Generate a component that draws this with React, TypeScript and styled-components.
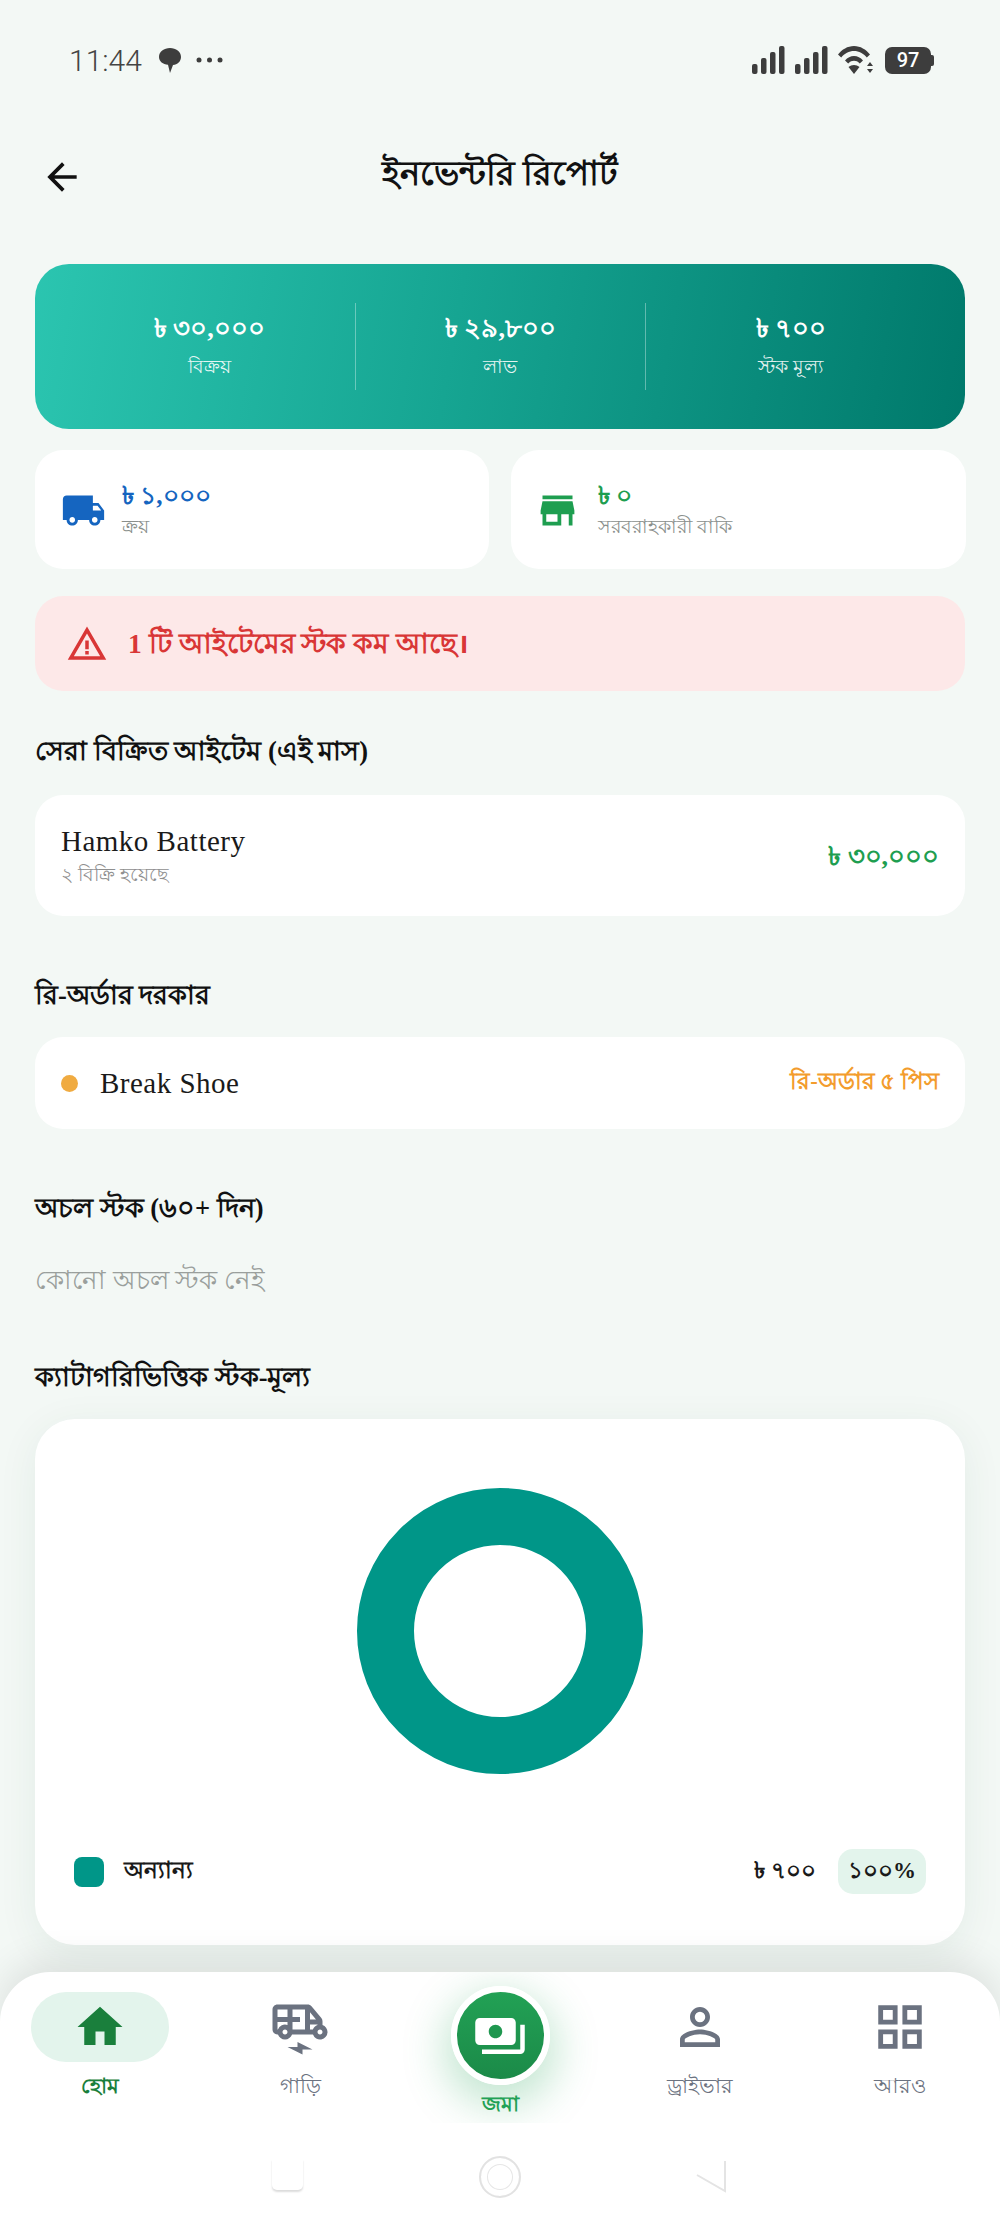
import React from "react";
import styled, { createGlobalStyle } from "styled-components";
import {
  MdArrowBack, MdLocalShipping, MdStore, MdWarningAmber, MdHome,
  MdOutlineElectricRickshaw, MdPersonOutline, MdOutlineGridView, MdPayments,
} from "react-icons/md";

const Global = createGlobalStyle`
  html, body { margin: 0; padding: 0; background: #f3f8f5; }
  * { box-sizing: border-box; }
`;

const Page = styled.div`
  width: 1000px; height: 2225px; overflow: hidden; display: flex; flex-direction: column;
  background: #f3f8f5; color: #111;
  font-family: "Liberation Serif", "Noto Sans", serif;
`;
const StatusBar = styled.div`
  height: 120px; flex: none; padding: 0 69px 0 69px; display: flex; align-items: center; justify-content: space-between; color: #3d3d3d;
`;
const StatusGroup = styled.div`display: flex; align-items: center; gap: ${p => p.$gap ?? 8}px;`;
const Time = styled.span`font: 300 30px Roboto, sans-serif; color: #444; margin-right: 8px;`;
const Battery = styled.span`
  width: 46px; height: 27px; border-radius: 7px; background: #3d3d3d; color: #fff; position: relative;
  font: 500 20px/27px Roboto, sans-serif; text-align: center; display: block; margin-left: 2px;
  &::after { content: ""; position: absolute; right: -3px; top: 8px; width: 3px; height: 11px; border-radius: 0 2px 2px 0; background: #3d3d3d; }
`;
const Header = styled.header`
  height: 112px; flex: none; display: flex; align-items: center; justify-content: center; position: relative;
`;
const Back = styled.span`position: absolute; left: 40px; top: 35px; display: flex; color: #111;`;
const Title = styled.h1`margin: 0 0 4px; font-size: 34px; font-weight: 700; line-height: 48px;`;
const Main = styled.main`flex: none; padding: 32px 35px 0; display: flex; flex-direction: column;`;
const Hero = styled.section`
  height: 165px; border-radius: 34px; padding: 39px 29px; flex: none; display: grid; grid-template-columns: repeat(3, 1fr);
  background: linear-gradient(100deg, #2bc5b0 0%, #16a592 45%, #00796b 100%); color: #fff;
`;
const HeroCol = styled.div`
  display: flex; flex-direction: column; align-items: center; padding-top: 9px; gap: 8px;
  border-left: ${p => (p.$first ? "0" : "1px solid rgba(255,255,255,.35)")};
`;
const HeroValue = styled.div`font-size: 26px; font-weight: 700; line-height: 34px;`;
const HeroLabel = styled.div`font-size: 19px; line-height: 26px; color: rgba(255,255,255,.9);`;
const TwoUp = styled.div`margin-top: 21px; display: grid; grid-template-columns: 454px 455px; gap: 22px;`;
const StatCard = styled.div`
  height: 119px; background: #fff; border-radius: 28px; display: flex; align-items: center; padding-left: ${p => p.$pad}px; gap: ${p => p.$gap}px;
`;
const StatIcon = styled.span`display: flex; color: ${p => p.$color}; margin-top: 2px;`;
const StatText = styled.div`display: flex; flex-direction: column; gap: 1px; padding-bottom: 1px;`;
const StatValue = styled.div`font-size: 25px; font-weight: 700; line-height: 34px; color: ${p => p.$color};`;
const StatLabel = styled.div`font-size: 18.500px; line-height: 26px; color: #8a8f8c;`;
const Alert = styled.div`
  margin-top: 27px; height: 95px; border-radius: 28px; background: #fde8e8; display: flex; align-items: center; gap: 20px; padding-left: 31px; color: #d93636;
`;
const AlertText = styled.span`font-size: 27.500px; font-weight: 700; line-height: 36px;`;
const SectionTitle = styled.h2`
  margin: ${p => p.$top}px 0 0; height: 40px; font-size: 26.500px; font-weight: 700; line-height: 40px; color: #111;
`;
const RowCard = styled.div`
  margin-top: ${p => p.$top}px; height: ${p => p.$h}px; background: #fff; border-radius: 28px; display: flex; align-items: center; justify-content: space-between; padding: 0 26px;
`;
const ItemName = styled.div`font-size: 29px; font-weight: 400; letter-spacing: .5px; line-height: 36px; color: #1a1a1a;`;
const ItemSub = styled.div`font-size: 19px; line-height: 28px; color: #8f8f8f; margin-top: 2px;`;
const Price = styled.div`font-size: 26px; font-weight: 700; color: #1e9e50; margin-top: 4px;`;
const Dot = styled.span`width: 17px; height: 17px; border-radius: 50%; background: #f0ab41; flex: none;`;
const RowLeft = styled.div`display: flex; align-items: center; gap: 22px;`;
const Reorder = styled.div`font-size: 22.500px; font-weight: 600; color: #f39c2d;`;
const Empty = styled.div`margin-top: 33px; height: 40px; line-height: 40px; font-size: 26px; color: #9a9f9c;`;
const ChartCard = styled.section`
  margin-top: 22px; height: 526px; background: #fff; border-radius: 40px; padding: 69px 39px 0 39px;
  box-shadow: 0 8px 40px rgba(30, 90, 60, .07); display: flex; flex-direction: column; align-items: stretch;
`;
const DonutWrap = styled.div`display: flex; justify-content: center;`;
const Legend = styled.div`margin-top: 75px; height: 45px; display: flex; align-items: center; gap: 22px;`;
const Swatch = styled.span`width: 30px; height: 30px; border-radius: 8px; background: #009688; flex: none;`;
const LegendLabel = styled.span`font-size: 23px; font-weight: 600; color: #1a1a1a; margin-right: auto; margin-left: -2px;`;
const LegendValue = styled.span`font-size: 23px; font-weight: 600; color: #1a1a1a;`;
const Percent = styled.span`
  width: 88px; height: 45px; border-radius: 15px; background: #e3f4ec; font-size: 23px; font-weight: 700; display: flex; align-items: center; justify-content: center; color: #1a1a1a;
`;
const Nav = styled.nav`
  margin-top: 27px; flex: 1; background: #fff; border-radius: 50px 50px 0 0; position: relative; z-index: 2; box-shadow: 0 -12px 36px rgba(0,0,0,.09);
  display: flex; flex-direction: column;
`;
const NavRow = styled.div`height: 151px; flex: none; overflow: hidden; display: grid; grid-template-columns: repeat(5, 1fr);`;
const NavItem = styled.div`display: flex; flex-direction: column; align-items: center;`;
const NavIcon = styled.span`
  margin-top: 20px; width: 138px; height: 70px; border-radius: 35px; display: flex; align-items: center; justify-content: center;
  background: ${p => (p.$active ? "#e3f4ec" : "transparent")}; color: ${p => (p.$active ? "#1a7f3c" : "#6b7280")};
`;
const NavLabel = styled.span`margin-top: 8px; font-size: 21px; line-height: 32px; font-weight: ${p => (p.$active ? 600 : 500)}; color: ${p => p.$color};`;
const CenterButton = styled.span`
  margin-top: 14px; width: 99px; height: 99px; border-radius: 50%; border: 6px solid #fff; color: #fff; display: flex; align-items: center; justify-content: center;
  box-shadow: 0 14px 40px 8px rgba(34, 161, 85, .26); background: linear-gradient(180deg, #22a155, #1b8a48);
`;
const CenterLabel = styled(NavLabel)`margin-top: 3px; font-weight: 600;`;
const SystemBar = styled.div`flex: 1; display: grid; grid-template-columns: repeat(3, 200px); justify-content: center; justify-items: center; padding-top: 36px; align-items: start;`;
const SysSquare = styled.span`width: 31px; height: 31px; margin-left: -26px; border-radius: 0 0 5px 5px; background: #fff; box-shadow: 0 2px 2px rgba(0,0,0,.14);`;
const SysCircle = styled.span`width: 42px; height: 42px; margin-top: -3px; border-radius: 50%; border: 2px solid #e2e2e2; box-shadow: inset 0 0 0 6px #fff, inset 0 0 0 7px #e6e6e6;`;
const SysBack = styled.svg`margin-left: 22px; display: block;`;

const Signal = () => (
  <svg width="34" height="28" viewBox="0 0 34 28" fill="#3d3d3d">
    <rect x="0" y="18" width="5.500" height="10" rx="2" /><rect x="9" y="12" width="5.500" height="16" rx="2" />
    <rect x="18" y="6" width="5.500" height="22" rx="2" /><rect x="27" y="0" width="5.500" height="28" rx="2" />
  </svg>
);

export default function App() {
  return (
    <Page>
      <Global />
      <StatusBar>
        <StatusGroup $gap={8}>
          <Time>11:44</Time>
          <svg width="24" height="30" viewBox="0 0 24 30" fill="#3d3d3d"><path d="M12 3c6 0 11 3.500 11 9 0 4.500-3.500 7.500-8 8l-3 8-2-8.200C5 19.300 1 16.500 1 12 1 6.500 6 3 12 3z" /></svg>
          <svg width="27" height="6" viewBox="0 0 27 6" fill="#3d3d3d" style={{ marginLeft: 6 }}><circle cx="3" cy="3" r="2.500" /><circle cx="13.500" cy="3" r="2.500" /><circle cx="24" cy="3" r="2.500" /></svg>
        </StatusGroup>
        <StatusGroup $gap={9}>
          <Signal />
          <Signal />
          <svg width="36" height="28" viewBox="0 0 36 28" fill="#3d3d3d">
            <path d="M0 8.500C4 3.500 9.500 0 16 0s12 3.500 16 8.500l-3.200 3C25.500 7.500 21 5 16 5S6.500 7.500 3.200 11.500z" />
            <path d="M7 14.500C9.500 11.500 12.500 10 16 10s6.500 1.500 9 4.500l-3.200 3C20 15.500 18 14.800 16 14.800s-4 .7-5.800 2.700z" />
            <path d="M16 28l-5.500-7c1.500-1.300 3.500-2 5.500-2s4 .7 5.500 2z" />
            <path d="M32 16l3 4h-6zM32 27l-3-4h6z" />
          </svg>
          <Battery>97</Battery>
        </StatusGroup>
      </StatusBar>
      <Header>
        <Back><MdArrowBack size={44} /></Back>
        <Title>ইনভেন্টরি রিপোর্ট</Title>
      </Header>
      <Main>
        <Hero>
          <HeroCol $first><HeroValue>৳ ৩০,০০০</HeroValue><HeroLabel>বিক্রয়</HeroLabel></HeroCol>
          <HeroCol><HeroValue>৳ ২৯,৮০০</HeroValue><HeroLabel>লাভ</HeroLabel></HeroCol>
          <HeroCol><HeroValue>৳ ৭০০</HeroValue><HeroLabel>স্টক মূল্য</HeroLabel></HeroCol>
        </Hero>
        <TwoUp>
          <StatCard $pad={26} $gap={16}>
            <StatIcon $color="#1565c0"><MdLocalShipping size={45} /></StatIcon>
            <StatText><StatValue $color="#1565c0">৳ ১,০০০</StatValue><StatLabel>ক্রয়</StatLabel></StatText>
          </StatCard>
          <StatCard $pad={24} $gap={18}>
            <StatIcon $color="#1e9e50"><MdStore size={45} /></StatIcon>
            <StatText><StatValue $color="#1e9e50">৳ ০</StatValue><StatLabel>সরবরাহকারী বাকি</StatLabel></StatText>
          </StatCard>
        </TwoUp>
        <Alert>
          <MdWarningAmber size={42} />
          <AlertText>1 টি আইটেমের স্টক কম আছে।</AlertText>
        </Alert>
        <SectionTitle $top={40}>সেরা বিক্রিত আইটেম (এই মাস)</SectionTitle>
        <RowCard $top={24} $h={121}>
          <div>
            <ItemName>Hamko Battery</ItemName>
            <ItemSub>২ বিক্রি হয়েছে</ItemSub>
          </div>
          <Price>৳ ৩০,০০০</Price>
        </RowCard>
        <SectionTitle $top={59}>রি-অর্ডার দরকার</SectionTitle>
        <RowCard $top={22} $h={92}>
          <RowLeft><Dot /><ItemName>Break Shoe</ItemName></RowLeft>
          <Reorder>রি-অর্ডার ৫ পিস</Reorder>
        </RowCard>
        <SectionTitle $top={59}>অচল স্টক (৬০+ দিন)</SectionTitle>
        <Empty>কোনো অচল স্টক নেই</Empty>
        <SectionTitle $top={56}>ক্যাটাগরিভিত্তিক স্টক-মূল্য</SectionTitle>
        <ChartCard>
          <DonutWrap>
            <svg width="286" height="286" viewBox="0 0 286 286"><circle cx="143" cy="143" r="114.500" fill="none" stroke="#009688" strokeWidth="57" /></svg>
          </DonutWrap>
          <Legend>
            <Swatch />
            <LegendLabel>অন্যান্য</LegendLabel>
            <LegendValue>৳ ৭০০</LegendValue>
            <Percent>১০০%</Percent>
          </Legend>
        </ChartCard>
      </Main>
      <Nav>
        <NavRow>
          <NavItem><NavIcon $active><MdHome size={54} /></NavIcon><NavLabel $active $color="#1a7f3c">হোম</NavLabel></NavItem>
          <NavItem><NavIcon><MdOutlineElectricRickshaw size={60} /></NavIcon><NavLabel $color="#6b7280">গাড়ি</NavLabel></NavItem>
          <NavItem><CenterButton><MdPayments size={54} /></CenterButton><CenterLabel $color="#22a155">জমা</CenterLabel></NavItem>
          <NavItem><NavIcon><MdPersonOutline size={60} /></NavIcon><NavLabel $color="#6b7280">ড্রাইভার</NavLabel></NavItem>
          <NavItem><NavIcon><MdOutlineGridView size={58} /></NavIcon><NavLabel $color="#6b7280">আরও</NavLabel></NavItem>
        </NavRow>
        <SystemBar>
          <SysSquare />
          <SysCircle />
          <SysBack width="32" height="34" viewBox="0 0 32 34"><path d="M30 2v30L2 16" fill="none" stroke="#e4e4e4" strokeWidth="2" /></SysBack>
        </SystemBar>
      </Nav>
    </Page>
  );
}
